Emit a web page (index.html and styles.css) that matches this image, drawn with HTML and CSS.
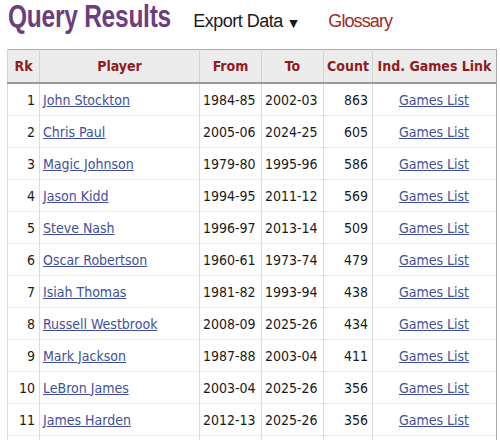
FILE: index.html
```html
<!DOCTYPE html>
<html>
<head>
<meta charset="utf-8">
<link rel="stylesheet" href="styles.css">
</head>
<body>
<div class="page">
  <div class="topbar">
    <h1 class="title">Query Results</h1>
    <span class="export">Export Data <span class="caret">▼</span></span>
    <span class="glossary">Glossary</span>
  </div>
  <table class="results">
    <colgroup>
      <col class="c-rk"><col class="c-player"><col class="c-from"><col class="c-to"><col class="c-count"><col class="c-link">
    </colgroup>
    <thead>
      <tr><th>Rk</th><th>Player</th><th>From</th><th>To</th><th>Count</th><th>Ind. Games Link</th></tr>
    </thead>
    <tbody>
      <tr><td class="num">1</td><td><a href="#">John Stockton</a></td><td>1984-85</td><td>2002-03</td><td class="num">863</td><td class="ctr"><a href="#">Games List</a></td></tr>
      <tr><td class="num">2</td><td><a href="#">Chris Paul</a></td><td>2005-06</td><td>2024-25</td><td class="num">605</td><td class="ctr"><a href="#">Games List</a></td></tr>
      <tr><td class="num">3</td><td><a href="#">Magic Johnson</a></td><td>1979-80</td><td>1995-96</td><td class="num">586</td><td class="ctr"><a href="#">Games List</a></td></tr>
      <tr><td class="num">4</td><td><a href="#">Jason Kidd</a></td><td>1994-95</td><td>2011-12</td><td class="num">569</td><td class="ctr"><a href="#">Games List</a></td></tr>
      <tr><td class="num">5</td><td><a href="#">Steve Nash</a></td><td>1996-97</td><td>2013-14</td><td class="num">509</td><td class="ctr"><a href="#">Games List</a></td></tr>
      <tr><td class="num">6</td><td><a href="#">Oscar Robertson</a></td><td>1960-61</td><td>1973-74</td><td class="num">479</td><td class="ctr"><a href="#">Games List</a></td></tr>
      <tr><td class="num">7</td><td><a href="#">Isiah Thomas</a></td><td>1981-82</td><td>1993-94</td><td class="num">438</td><td class="ctr"><a href="#">Games List</a></td></tr>
      <tr><td class="num">8</td><td><a href="#">Russell Westbrook</a></td><td>2008-09</td><td>2025-26</td><td class="num">434</td><td class="ctr"><a href="#">Games List</a></td></tr>
      <tr><td class="num">9</td><td><a href="#">Mark Jackson</a></td><td>1987-88</td><td>2003-04</td><td class="num">411</td><td class="ctr"><a href="#">Games List</a></td></tr>
      <tr><td class="num">10</td><td><a href="#">LeBron James</a></td><td>2003-04</td><td>2025-26</td><td class="num">356</td><td class="ctr"><a href="#">Games List</a></td></tr>
      <tr><td class="num">11</td><td><a href="#">James Harden</a></td><td>2012-13</td><td>2025-26</td><td class="num">356</td><td class="ctr"><a href="#">Games List</a></td></tr>
      <tr class="more"><td></td><td></td><td></td><td></td><td></td><td></td></tr>
    </tbody>
  </table>
</div>
</body>
</html>
```

FILE: styles.css
```css
html, body {
  margin: 0;
  padding: 0;
  background: #ffffff;
}
.page {
  padding: 0 0 0 7px;
  width: 489px;
}
.topbar {
  display: flex;
  align-items: baseline;
  height: 49px;
  padding-left: 1px;
  font-family: "Liberation Sans", Arial, sans-serif;
}
.title {
  display: inline-block;
  margin: 0 -40px 0 0;
  font-size: 31px;
  line-height: 34px;
  font-weight: bold;
  color: #6b3e80;
  letter-spacing: -0.3px;
  transform: scaleX(0.79);
  transform-origin: left center;
}
.export {
  margin-left: 19px;
  font-size: 18px;
  color: #1a1a1a;
  letter-spacing: -0.5px;
}
.caret {
  font-family: "DejaVu Sans", sans-serif;
  font-size: 11px;
  margin-left: 2px;
}
.glossary {
  margin-left: 31px;
  font-size: 18px;
  color: #9e2a2e;
  letter-spacing: -0.9px;
}
.results {
  border-collapse: collapse;
  table-layout: fixed;
  width: 489px;
  font-family: "DejaVu Sans Condensed", "DejaVu Sans", sans-serif;
  font-stretch: condensed;
  font-size: 14px;
  color: #1a1a1a;
  border: 1px solid #a8a8a8;
  border-bottom: none;
}
.c-rk { width: 32px; }
.c-player { width: 160px; }
.c-from { width: 62px; }
.c-to { width: 62px; }
.c-count { width: 49px; }
.c-link { width: 124px; }
.results th {
  background: #ececec;
  color: #8e1d22;
  font-weight: bold;
  height: 32px;
  padding: 0 3px;
  border-left: 1px solid #d4d4d4;
  border-bottom: 2px solid #9a9a9a;
  text-align: center;
  white-space: nowrap;
}
.results td {
  height: 31px;
  padding: 0 4px 0 3px;
  border-left: 1px solid #dcdcdc;
  border-top: 1px dotted #d8d8d8;
  white-space: nowrap;
  overflow: hidden;
}
.results td.num {
  text-align: right;
  padding-right: 4px;
}
.results td.ctr {
  text-align: center;
}
.results a {
  color: #404f9e;
  text-decoration: underline;
}
```
